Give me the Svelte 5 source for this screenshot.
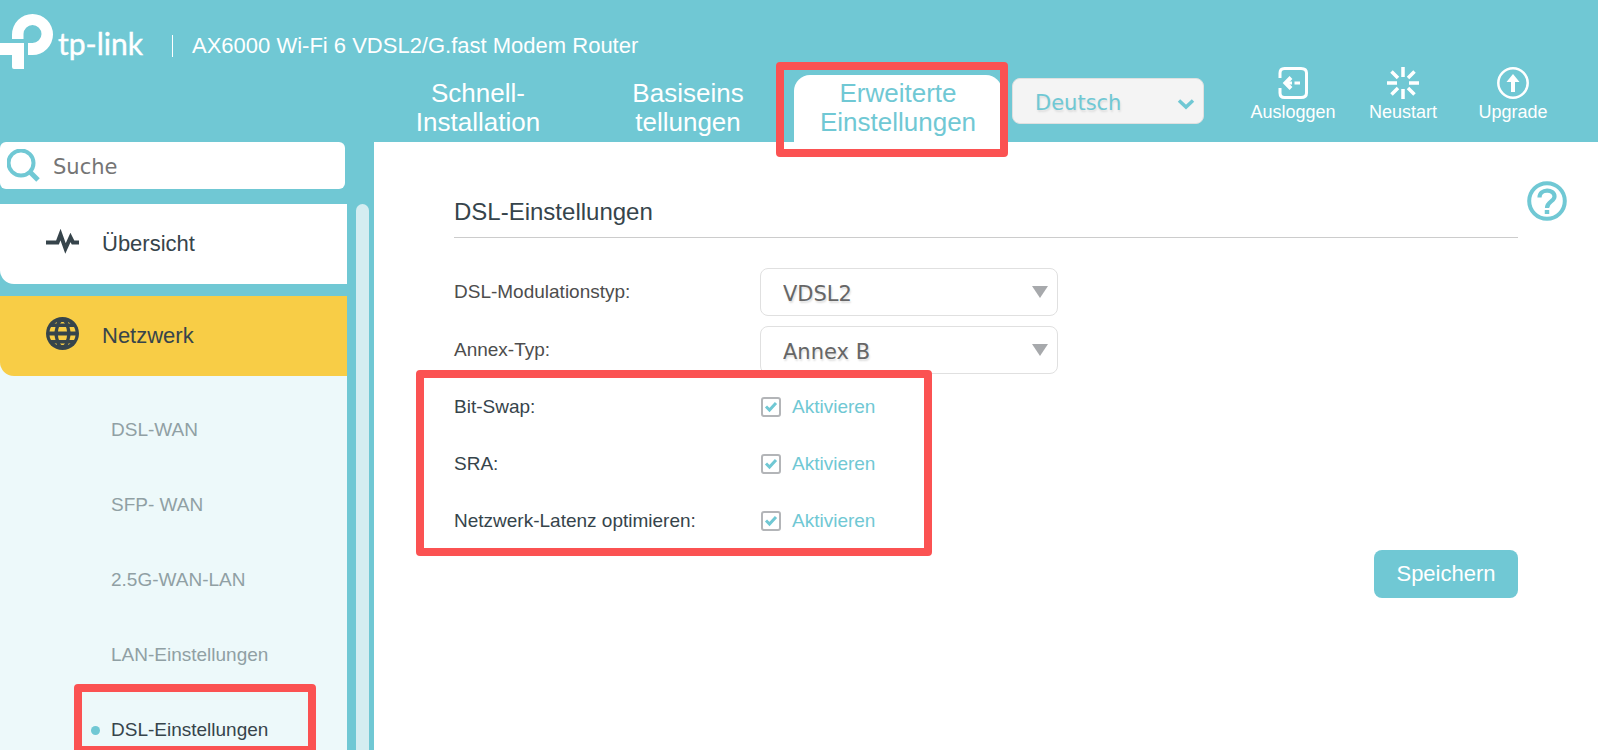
<script>
    let language = $state("Deutsch");
    let modulation = $state("VDSL2");
    let annex = $state("Annex B");
    let search = $state("");

    let options = $state([
        { id: "bitswap", label: "Bit-Swap:", enabled: true },
        { id: "sra", label: "SRA:", enabled: true },
        { id: "latency", label: "Netzwerk-Latenz optimieren:", enabled: true },
    ]);

    const tabs = [
        { lines: ["Schnell-", "Installation"] },
        { lines: ["Basiseins", "tellungen"] },
        { lines: ["Erweiterte", "Einstellungen"], active: true },
    ];

    const submenu = [
        "DSL-WAN",
        "SFP- WAN",
        "2.5G-WAN-LAN",
        "LAN-Einstellungen",
        "DSL-Einstellungen",
    ];
    let current = $state("DSL-Einstellungen");
</script>

<div class="page">
    <header>
        <div class="brand">
            <svg class="logo" viewBox="0 0 144 56" role="img" aria-label="tp-link">
                <path
                    d="M12 25V20.500A20.500 20.500 0 1 1 32.500 41H28V29H32.500A9 9 0 1 0 23.500 20V25Z"
                    fill="#fff"
                />
                <path d="M0 29H24V55H14Q12 55 12 53V41H0Z" fill="#fff" />
                <text x="58" y="41">tp-link</text>
            </svg>
            <span class="model">AX6000 Wi-Fi 6 VDSL2/G.fast Modem Router</span>
        </div>

        <div class="bar">
            <nav class="tabs">
                {#each tabs as tab}
                    <a href="#top" class="tab" class:active={tab.active}>
                        {tab.lines[0]}<br />{tab.lines[1]}
                    </a>
                {/each}
            </nav>

            <div class="select language">
                <select bind:value={language} aria-label="Sprache">
                    <option>Deutsch</option>
                    <option>English</option>
                </select>
                <svg viewBox="0 0 18 12" width="18" height="12">
                    <path d="M2 2.500L9 9L16 2.500" fill="none" stroke="#70c8d4" stroke-width="3.500" />
                </svg>
            </div>

            <div class="tools">
                <button>
                    <svg viewBox="0 0 32 32">
                        <path
                            d="M3 11V6Q3 1.500 7.500 1.500H24Q29.500 1.500 29.500 6V26Q29.500 30.500 24 30.500H7.500Q3 30.500 3 26V21"
                            stroke-width="3"
                        />
                        <path d="M14 10.500L8.500 16L14 21.500" stroke-width="4" />
                        <path d="M8 16H15M17.500 16H23" stroke-width="3" />
                    </svg>
                    Ausloggen
                </button>
                <button>
                    <svg viewBox="0 0 32 32">
                        <path
                            d="M16 0V10M16 22V32M0 16H10M22 16H32M4.500 4.500L11 11M21 21L27.500 27.500M4.500 27.500L11 21M21 11L27.500 4.500"
                            stroke-width="3.500"
                        />
                    </svg>
                    Neustart
                </button>
                <button>
                    <svg viewBox="0 0 32 32">
                        <circle cx="16" cy="16" r="14.700" stroke-width="2.500" />
                        <path d="M16 25V12" stroke-width="4" />
                        <path d="M16 7L22.500 15H9.500Z" fill="#fff" stroke="none" />
                    </svg>
                    Upgrade
                </button>
            </div>
        </div>
    </header>

    <div class="body">
        <aside>
            <label class="search">
                <svg viewBox="0 0 33 33" width="33" height="33">
                    <circle cx="14" cy="14" r="12.500" />
                    <path d="M23 23L31 31" stroke-width="5" />
                </svg>
                <input type="text" placeholder="Suche" aria-label="Suche" bind:value={search} />
            </label>

            <div class="menu-wrap">
                <div class="menu">
                    <a href="#overview" class="item">
                        <svg viewBox="0 0 33 33">
                            <path
                                d="M0 17.500H11.500L14.500 9.500L19.500 23.500L24.500 12.500L27 17.500H33"
                                fill="none"
                                stroke="#36444b"
                                stroke-width="4"
                            />
                        </svg>
                        Übersicht
                    </a>
                    <div class="group">
                        <a href="#network" class="item open">
                            <svg viewBox="0 0 33 33">
                                <circle cx="16.500" cy="16.500" r="16.500" fill="#36444b" />
                                <g fill="#f8cd46">
                                    <path d="M13 10H20Q21 12.500 21 14.500H12Q12 12.500 13 10Z" />
                                    <path d="M12 18.500H21Q21 20.500 20 23H13Q12 20.500 12 18.500Z" />
                                    <path d="M5 10H9.500L8.500 14.500H3.500Q3.700 12 5 10Z" />
                                    <path d="M28 10H23.500L24.500 14.500H29.500Q29.300 12 28 10Z" />
                                    <path d="M5 23H9.500L8.500 18.500H3.500Q3.700 21 5 23Z" />
                                    <path d="M28 23H23.500L24.500 18.500H29.500Q29.300 21 28 23Z" />
                                    <path d="M14 6.500L15.500 5H17.500L19 6.500ZM8.500 6.500L11 5L10.500 6.500ZM24.500 6.500L22 5L22.500 6.500Z" />
                                    <path d="M14 26.500L15.500 28H17.500L19 26.500ZM8.500 26.500L11 28L10.500 26.500ZM24.500 26.500L22 28L22.500 26.500Z" />
                                </g>
                            </svg>
                            Netzwerk
                        </a>
                        <ul>
                            {#each submenu as name}
                                <li class:current={name === current}>
                                    <a href="#network" onclick={() => (current = name)}>{name}</a>
                                </li>
                            {/each}
                        </ul>
                    </div>
                </div>
                <div class="scroll"></div>
            </div>
        </aside>

        <main>
            <section>
                <h1>DSL-Einstellungen</h1>

                <form onsubmit={(e) => e.preventDefault()}>
                    <div class="row">
                        <label class="name" for="modulation">DSL-Modulationstyp:</label>
                        <div class="select">
                            <select id="modulation" bind:value={modulation}>
                                <option>VDSL2</option>
                                <option>ADSL2+</option>
                            </select>
                            <svg viewBox="0 0 18 12" width="18" height="12">
                                <path d="M1 0H17L9 12Z" fill="#a7a9ac" />
                            </svg>
                        </div>
                    </div>
                    <div class="row">
                        <label class="name" for="annex">Annex-Typ:</label>
                        <div class="select">
                            <select id="annex" bind:value={annex}>
                                <option>Annex A</option>
                                <option>Annex B</option>
                            </select>
                            <svg viewBox="0 0 18 12" width="18" height="12">
                                <path d="M1 0H17L9 12Z" fill="#a7a9ac" />
                            </svg>
                        </div>
                    </div>

                    <div class="options">
                        {#each options as option}
                            <div class="row option">
                                <span class="name">{option.label}</span>
                                <input type="checkbox" id={option.id} bind:checked={option.enabled} />
                                <label class="enable" for={option.id}>Aktivieren</label>
                            </div>
                        {/each}
                    </div>

                    <button class="save">Speichern</button>
                </form>
            </section>

            <button class="help" aria-label="Hilfe">
                <svg viewBox="0 0 40 40" width="40" height="40" fill="none" stroke="#70c8d4">
                    <circle cx="20" cy="20" r="17.800" stroke-width="4" />
                    <path
                        d="M12.500 16.500C12.500 7.500 27.500 7.500 27.500 15.500C27.500 20.500 20 20.500 20 27"
                        stroke-width="4.200"
                    />
                    <path d="M20 29V33" stroke-width="4.500" />
                </svg>
            </button>
        </main>
    </div>
</div>

<style>
    :global(body) {
        margin: 0;
    }

    .page {
        --teal: #70c8d4;
        --dark: #36444b;
        --red: #fb5252;
        display: flex;
        flex-direction: column;
        height: 100vh;
        overflow: hidden;
        background-color: var(--teal);
        font-family: "Liberation Sans", Arial, sans-serif;
        font-size: 19px;
        color: var(--dark);
    }
    .page * {
        box-sizing: border-box;
    }
    a {
        color: inherit;
        text-decoration: none;
    }
    button {
        border: 0;
        padding: 0;
        background: none;
        font: inherit;
        cursor: pointer;
    }

    /* Header */
    .brand {
        display: flex;
        height: 67px;
        padding-top: 14px;
        color: #fff;
    }
    .logo {
        width: 144px;
        height: 56px;
        flex: none;
        overflow: visible;
    }
    .logo text {
        font-family: Lato, sans-serif;
        font-size: 30px;
        fill: #fff;
        stroke: #fff;
        stroke-width: 0.4;
    }
    .model {
        margin: 21px 0 0 28px;
        padding-left: 19px;
        height: 22px;
        line-height: 22px;
        border-left: 1px solid #fff;
        font-size: 22px;
        white-space: nowrap;
    }
    .bar {
        display: flex;
        height: 75px;
        padding-left: 374px;
    }
    .tabs {
        display: flex;
        gap: 2px;
        padding-top: 8px;
    }
    .tab {
        width: 208px;
        padding-top: 4px;
        line-height: 29px;
        font-size: 26px;
        text-align: center;
        color: #fff;
    }
    .tab.active {
        position: relative;
        background-color: #fff;
        color: var(--teal);
        border-radius: 16px 16px 0 0;
    }
    .tab.active::after,
    .current::after,
    .options::after {
        content: "";
        position: absolute;
        border: 8px solid var(--red);
        border-radius: 4px;
        pointer-events: none;
        z-index: 1;
    }
    .tab.active::after {
        inset: -13px -6px -15px -18px;
    }

    .select {
        display: grid;
        align-items: center;
        width: 298px;
        height: 48px;
    }
    .select select,
    .select svg {
        grid-area: 1 / 1;
    }
    .select svg {
        justify-self: end;
        margin-right: 9px;
        pointer-events: none;
    }
    select {
        appearance: none;
        width: 100%;
        height: 100%;
        padding: 4px 22px 0;
        border: 1px solid #e0e0e0;
        border-radius: 8px;
        background-color: #fff;
        color: #666;
        font-family: "DejaVu Sans", Verdana, sans-serif;
        font-size: 21px;
        text-shadow: 1px 2px 2px #ddd;
    }
    .language {
        flex: none;
        width: 192px;
        height: 46px;
        margin: 11px 0 0 10px;
    }
    .language select {
        background-color: #f4f4f4;
        color: var(--teal);
    }
    .language svg {
        margin-top: 6px;
    }

    .tools {
        display: flex;
        margin-left: auto;
        padding-right: 30px;
        align-items: start;
    }
    .tools button {
        display: flex;
        flex-direction: column;
        align-items: center;
        width: 110px;
        line-height: 26px;
        font-size: 18px;
        color: #fff;
    }
    .tools svg {
        width: 32px;
        height: 32px;
        fill: none;
        stroke: #fff;
    }

    /* Sidebar */
    .body {
        display: flex;
        flex: 1;
        min-height: 0;
    }
    aside {
        display: flex;
        flex-direction: column;
        flex: none;
        width: 374px;
    }
    .search {
        display: flex;
        align-items: center;
        flex: none;
        width: 345px;
        height: 47px;
        margin-bottom: 15px;
        padding-left: 7px;
        background-color: #fff;
        border-radius: 6px;
    }
    .search svg {
        flex: none;
        fill: none;
        stroke: var(--teal);
        stroke-width: 4;
    }
    .search input {
        flex: 1;
        min-width: 0;
        padding: 2px 13px 0;
        border: 0;
        background: none;
        font-family: "DejaVu Sans", Verdana, sans-serif;
        font-size: 21px;
    }
    .search input::placeholder {
        color: #757575;
    }
    .menu-wrap {
        display: flex;
        flex: 1;
        min-height: 0;
    }
    .menu {
        width: 347px;
        overflow: hidden;
    }
    .scroll {
        width: 13px;
        margin-left: 9px;
        background-color: #d4edf1;
        border-radius: 7px 7px 0 0;
    }
    .item {
        display: flex;
        align-items: center;
        gap: 23px;
        height: 80px;
        padding-left: 46px;
        background-color: #fff;
        border-bottom-left-radius: 14px;
        font-size: 22px;
    }
    .item svg {
        width: 33px;
        height: 33px;
        margin-bottom: 5px;
    }
    .group {
        margin-top: 12px;
        background: linear-gradient(var(--teal) 40px, #edf9fa 40px);
    }
    .item.open {
        background-color: #f8cd46;
    }
    ul {
        margin: 0;
        padding: 16px 0 0;
        list-style: none;
    }
    li {
        position: relative;
        padding-left: 111px;
        line-height: 75px;
        color: #90a0a4;
    }
    .current {
        color: var(--dark);
    }
    .current::before {
        content: "";
        position: absolute;
        left: 91px;
        top: 34px;
        width: 9px;
        height: 9px;
        border-radius: 50%;
        background-color: var(--teal);
    }
    .current::after {
        inset: -8px 31px 13px 74px;
    }

    /* Content */
    main {
        display: flex;
        flex: 1;
        gap: 9px;
        align-items: start;
        min-width: 0;
        padding: 48px 31px 0 80px;
        background-color: #fff;
    }
    section {
        flex: 1;
    }
    h1 {
        margin: 0 0 30px;
        padding-bottom: 3px;
        line-height: 44px;
        border-bottom: 1px solid #ccc;
        font-size: 24px;
        font-weight: normal;
    }
    form {
        display: flex;
        flex-direction: column;
        gap: 10px;
    }
    .options {
        position: relative;
        display: flex;
        flex-direction: column;
        gap: 11px;
    }
    .options::after {
        top: -14px;
        bottom: -12px;
        left: -38px;
        width: 500px;
    }
    .row {
        display: flex;
        align-items: center;
        height: 48px;
        color: #4d4d4d;
    }
    .row.option {
        height: 46px;
        color: var(--dark);
    }
    .name {
        width: 306px;
    }
    input[type="checkbox"] {
        appearance: none;
        width: 20px;
        height: 20px;
        margin: 0 11px 0 1px;
        border: 2px solid #b3b5b8;
        border-radius: 3px;
        background-color: #fff;
    }
    input[type="checkbox"]:checked {
        background-image: url("data:image/svg+xml,%3Csvg xmlns='http://www.w3.org/2000/svg' viewBox='0 0 16 16'%3E%3Cpath d='M3 7.500L6.500 11L13 4' fill='none' stroke='%2370c8d4' stroke-width='3'/%3E%3C/svg%3E");
    }
    .enable {
        color: var(--teal);
    }
    .save {
        align-self: end;
        width: 144px;
        height: 48px;
        margin-top: -4px;
        border-radius: 8px;
        background-color: var(--teal);
        color: #fff;
        font-size: 22px;
    }
    .help {
        display: flex;
        margin-top: -9px;
    }
</style>
